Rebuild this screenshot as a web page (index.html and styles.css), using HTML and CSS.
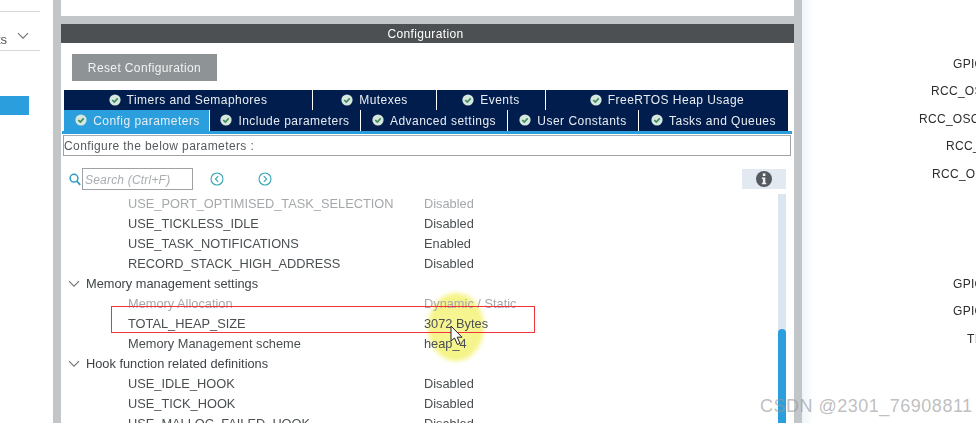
FILE: index.html
```html
<!DOCTYPE html>
<html lang="en">
<head>
<meta charset="utf-8">
<title>Configuration</title>
<link rel="stylesheet" href="styles.css">
</head>
<body>
<svg class="defs" width="0" height="0" aria-hidden="true">
  <symbol id="chk" viewBox="0 0 12 12">
    <circle cx="6" cy="6" r="5.6" fill="#d6e8de"/>
    <path d="M3.3 6 5.3 8 8.7 4.4" fill="none" stroke="#3f8a62" stroke-width="1.7"/>
  </symbol>
  <symbol id="exp" viewBox="0 0 12 8">
    <path d="M1 1.2 6 6.2 11 1.2" fill="none" stroke="#6f7376" stroke-width="1.1"/>
  </symbol>
</svg>
<div class="screen">
  <aside class="side">
    <div class="side-row side-first"></div>
    <div class="side-row side-second">
      <span class="side-text">ts</span>
      <svg class="side-chev" width="12" height="8"><use href="#exp"/></svg>
    </div>
    <div class="side-sel"></div>
  </aside>
  <main class="main">
    <div class="top-blank"></div>
    <h1 class="title">Configuration</h1>
    <div class="panel">
      <button class="reset">Reset Configuration</button>
      <div class="tabs">
        <div class="tabrow tabrow-a">
          <div class="tab"><svg class="chk"><use href="#chk"/></svg>Timers and Semaphores</div>
          <div class="tab"><svg class="chk"><use href="#chk"/></svg>Mutexes</div>
          <div class="tab"><svg class="chk"><use href="#chk"/></svg>Events</div>
          <div class="tab"><svg class="chk"><use href="#chk"/></svg>FreeRTOS Heap Usage</div>
        </div>
        <div class="tabrow tabrow-b">
          <div class="tab tab-on"><svg class="chk"><use href="#chk"/></svg>Config parameters</div>
          <div class="tab"><svg class="chk"><use href="#chk"/></svg>Include parameters</div>
          <div class="tab"><svg class="chk"><use href="#chk"/></svg>Advanced settings</div>
          <div class="tab"><svg class="chk"><use href="#chk"/></svg>User Constants</div>
          <div class="tab"><svg class="chk"><use href="#chk"/></svg>Tasks and Queues</div>
        </div>
      </div>
      <div class="hint">Configure the below parameters :</div>
      <div class="tools">
        <svg class="glass" width="12" height="13" viewBox="0 0 12 13"><circle cx="5" cy="5.2" r="3.9" fill="none" stroke="#2f9ac4" stroke-width="1.5"/><path d="M7.8 8.2 11.2 11.8" stroke="#2f9ac4" stroke-width="1.7"/></svg>
        <div class="search">Search (Ctrl+F)</div>
        <svg class="nav nav-prev" width="14" height="14" viewBox="0 0 14 14"><circle cx="7" cy="7" r="6" fill="none" stroke="#35a3b5" stroke-width="1.1"/><path d="M8.2 4.2 5.4 7 8.2 9.8" fill="none" stroke="#35a3b5" stroke-width="1.1"/></svg>
        <svg class="nav nav-next" width="14" height="14" viewBox="0 0 14 14"><circle cx="7" cy="7" r="6" fill="none" stroke="#35a3b5" stroke-width="1.1"/><path d="M5.8 4.2 8.6 7 5.8 9.8" fill="none" stroke="#35a3b5" stroke-width="1.1"/></svg>
        <div class="info"><svg width="18" height="18" viewBox="0 0 18 18"><circle cx="9" cy="9" r="8" fill="#555a5e"/><rect x="7.8" y="3.4" width="2.6" height="2.6" fill="#eef2f6"/><path d="M6.9 7.4H10.3V12.7H11.3V14.2H6.9V12.7H7.9V8.9H6.9Z" fill="#eef2f6"/></svg></div>
      </div>
      <div class="treewrap">
        <div class="spot"></div>
        <div class="tree">
          <div class="row row-off"><span class="name">USE_PORT_OPTIMISED_TASK_SELECTION</span><span>Disabled</span></div>
          <div class="row"><span class="name">USE_TICKLESS_IDLE</span><span>Disabled</span></div>
          <div class="row"><span class="name">USE_TASK_NOTIFICATIONS</span><span>Enabled</span></div>
          <div class="row"><span class="name">RECORD_STACK_HIGH_ADDRESS</span><span>Disabled</span></div>
          <div class="group"><svg class="exp" width="12" height="8"><use href="#exp"/></svg>Memory management settings</div>
          <div class="row row-off"><span class="name">Memory Allocation</span><span>Dynamic / Static</span></div>
          <div class="row"><span class="name">TOTAL_HEAP_SIZE</span><span>3072 Bytes</span></div>
          <div class="row"><span class="name">Memory Management scheme</span><span>heap_4</span></div>
          <div class="group"><svg class="exp" width="12" height="8"><use href="#exp"/></svg>Hook function related definitions</div>
          <div class="row"><span class="name">USE_IDLE_HOOK</span><span>Disabled</span></div>
          <div class="row"><span class="name">USE_TICK_HOOK</span><span>Disabled</span></div>
          <div class="row"><span class="name">USE_MALLOC_FAILED_HOOK</span><span>Disabled</span></div>
        </div>
        <div class="scrollbar"><div class="thumb"></div></div>
        <div class="redbox"></div>
        <svg class="cursor" width="14" height="21" viewBox="0 0 14 21"><path d="M1 1V16L4.5 13 7.5 19.5 10 18.4 7.2 12.2H12Z" fill="#fff" stroke="#222" stroke-width="1"/></svg>
      </div>
    </div>
  </main>
  <section class="pins">
    <div class="pin pin-gpio">GPIO_Output</div>
    <div class="pin pin-osc">RCC_OSC32_IN</div>
    <div class="pin pin-osc2">RCC_OSC32_OUT</div>
    <div class="pin pin-rcc">RCC_OSC_IN</div>
    <div class="pin pin-osc3">RCC_OSC_OUT</div>
    <div class="pin-gap"></div>
    <div class="pin pin-gpio">GPIO_Output</div>
    <div class="pin pin-gpio">GPIO_Output</div>
    <div class="pin pin-t">TIM2_CH1</div>
  </section>
</div>
<div class="mark">CSDN @2301_76908811</div>
</body>
</html>
```
FILE: styles.css
```css
* { box-sizing: border-box; }
html, body { margin: 0; height: 423px; overflow: hidden; background: #fff; }
body { font-family: "Liberation Sans", Arial, sans-serif; font-size: 12px; color: #4a4f52; position: relative; }
.defs { position: absolute; }
.screen { display: flex; height: 423px; overflow: hidden; filter: blur(.3px); }

.side { width: 53px; flex: none; background: #fff; }
.side-row { width: 40px; border-bottom: 1px solid #d4d7d9; }
.side-first { height: 12px; }
.side-second { height: 39px; display: flex; align-items: flex-end; padding-bottom: 3px; }
.side-text { font-size: 13px; color: #555; margin-left: -9px; width: 21px; text-align: right; padding-right: 5px; line-height: 14px; }
.side-chev { margin-left: 5px; margin-bottom: 7px; }
.side-sel { width: 29px; height: 19px; margin-top: 45px; background: #2b9fdd; }

.main { width: 749px; flex: none; border-left: 8px solid #c2c6c8; border-right: 8px solid #c2c6c8; background: #c2c6c8; display: flex; flex-direction: column; }
.top-blank { height: 16px; background: #fff; flex: none; margin-bottom: 8px; }
.title { margin: 0; height: 19px; flex: none; background: #4c5052; color: #fff; font-size: 12px; font-weight: 400; text-align: center; line-height: 20px; letter-spacing: .35px; padding-right: 4px; }
.panel { flex: 1; background: #fff; padding: 11px 0 0 2px; display: flex; flex-direction: column; min-height: 0; }

.reset { display: block; width: 145px; height: 27px; margin: 0 0 9px 9px; padding: 0; border: 0; background: #8e9396; color: #f2f3f3; font: 12px "Liberation Sans", Arial, sans-serif; letter-spacing: .38px; }

.tabs { margin: 0 0 0 1px; width: 724px; }
.tabrow { display: grid; column-gap: 1px; background: #fff; }
.tabrow-a { grid-template-columns: 248px 123px 108px 242px; height: 20px; padding-bottom: 1px; }
.tabrow-b { grid-template-columns: 145px 150px 146px 130px 149px; height: 21px; }
.tab { background: #001d4d; color: #e8edf2; display: flex; align-items: center; justify-content: center; gap: 6px; letter-spacing: .47px; white-space: nowrap; line-height: 19px; padding-top: 1px; }
.tab-on { background: #2b9fdd; padding-left: 2px; }
.chk { width: 12px; height: 12px; flex: none; margin-top: -2px; }

.hint { width: 728px; height: 21px; margin: 4px 0 0 0; border: 1px solid #9ea2a5; border-top-color: #a9adb0; background: #fff; line-height: 20px; padding-left: 0; color: #555a5d; letter-spacing: .4px; position: relative; }
.hint::before { content: ""; position: absolute; left: -2px; right: -2px; top: -5px; height: 3px; background: #2b9fdd; }

.tools { display: flex; align-items: center; height: 22px; margin-top: 12px; position: relative; width: 725px; }
.glass { margin-left: 6px; flex: none; }
.search { width: 111px; height: 22px; margin-left: 1px; border: 1px solid #9ea2a5; font-style: italic; color: #a9adb0; line-height: 22px; padding-left: 2px; letter-spacing: .2px; flex: none; }
.nav { flex: none; }
.nav-prev { margin-left: 17px; }
.nav-next { margin-left: 34px; }
.info { margin-left: auto; margin-right: 2px; width: 44px; height: 20px; background: #e2e9f1; display: flex; align-items: center; justify-content: center; flex: none; }

.treewrap { position: relative; flex: 1; min-height: 0; width: 731px; margin: 3px 0 0 -2px; }
.tree { position: relative; padding-top: 1px; }
.row, .group { height: 20px; line-height: 20px; display: flex; white-space: nowrap; font-size: 12.8px; }
.row { padding-left: 67px; color: #4a4f52; }
.name { width: 296px; flex: none; }
.row-off { color: #a5a8aa; }
.group { color: #3f4447; align-items: center; padding-left: 7px; }
.exp { margin-right: 6px; flex: none; }

.spot { position: absolute; left: 367px; top: 100px; width: 56px; height: 68px; border-radius: 50%; background: radial-gradient(circle, #f6f59a 0, #f5f47e 100%); filter: blur(2px); }
.scrollbar { position: absolute; right: 6px; top: 1px; bottom: 0; width: 8px; background: #dce6f0; }
.thumb { position: absolute; left: 0; right: 0; top: 135px; bottom: 0; background: #2b9fdd; border-radius: 4px 4px 0 0; }
.redbox { position: absolute; left: 50px; top: 113px; width: 424px; height: 27px; border: 1px solid #f1343c; }
.cursor { position: absolute; left: 389px; top: 132px; }

.pins { flex: 1; min-width: 0; background: linear-gradient(90deg, #eef5f9, #fff 12px); padding-top: 50.5px; overflow: hidden; color: #2c2c2c; letter-spacing: .3px; }
.pin { height: 27.5px; line-height: 27.5px; white-space: nowrap; }
.pin-gap { height: 82.5px; }
.pin-gpio { margin-left: 151px; }
.pin-osc { margin-left: 129px; }
.pin-osc2 { margin-left: 117px; }
.pin-rcc { margin-left: 144px; }
.pin-osc3 { margin-left: 130px; }
.pin-t { margin-left: 165px; }

.mark { position: absolute; left: 760px; top: 396px; font-size: 18px; line-height: 20px; color: rgba(150,150,150,.62); letter-spacing: .5px; white-space: nowrap; }
```
